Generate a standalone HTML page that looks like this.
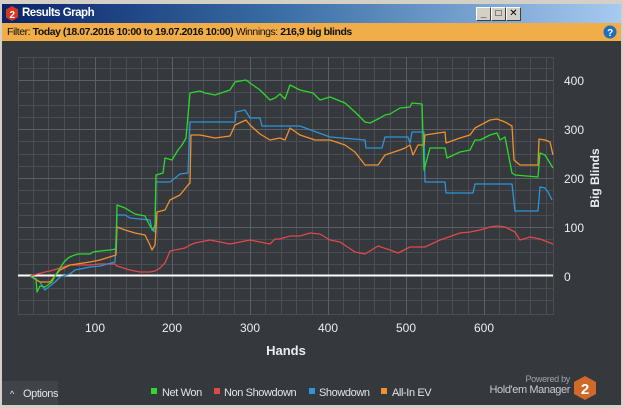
<!DOCTYPE html>
<html><head><meta charset="utf-8"><style>
body{margin:0;width:623px;height:408px;overflow:hidden;background:#d4d0c8;font-family:"Liberation Sans","DejaVu Sans",sans-serif;position:relative}
.title{position:absolute;left:2px;top:4px;width:619px;height:19px;background:linear-gradient(90deg,#0a246a 0%,#3a6ea5 45%,#a6caf0 100%);color:#fff;font-weight:bold;font-size:11.5px;letter-spacing:-0.5px;line-height:19px}
.filter{position:absolute;left:2px;top:23px;width:619px;height:18px;background:#f0ad48;font-size:10.5px;letter-spacing:-0.45px;line-height:18px;color:#111}
.body{position:absolute;left:2px;top:41px;width:619px;height:364px;background:#35383c}
.btn{position:absolute;top:3px;width:13px;height:12px;background:#d4d0c8;border:1px solid #fff;border-right-color:#404040;border-bottom-color:#404040;color:#000;font-size:10px;line-height:12px;text-align:center;letter-spacing:0}
</style></head><body>
<div class="title">
<svg style="position:absolute;left:3px;top:2px" width="14" height="15"><polygon points="7,0 13,3.5 13,11.5 7,15 1,11.5 1,3.5" fill="#d9381e"/><text x="7" y="12" fill="#fff" font-size="10" font-weight="bold" text-anchor="middle" font-family="Liberation Sans">2</text></svg>
<span style="position:absolute;left:20px">Results Graph</span>
<div class="btn" style="left:474px">_</div><div class="btn" style="left:489px">□</div><div class="btn" style="left:504px">✕</div>
</div>
<div class="filter"><span style="margin-left:5px">Filter: <b>Today (18.07.2016 10:00 to 19.07.2016 10:00)</b> Winnings: <b>216,9 big blinds</b></span>
<svg style="position:absolute;left:601px;top:2px" width="14" height="14"><circle cx="7" cy="7" r="6.5" fill="#1f6fc0"/><text x="7" y="11" fill="#fff" font-size="10" font-weight="bold" text-anchor="middle" font-family="Liberation Sans">?</text></svg></div>
<div class="body"></div>
<svg style="position:absolute;left:0;top:0" width="623" height="408">
<g stroke="#4a4d51" stroke-width="1">
<path d="M18.5 57V315 M33.5 57V315 M48.5 57V315 M64.5 57V315 M79.5 57V315 M110.5 57V315 M126.5 57V315 M141.5 57V315 M157.5 57V315 M188.5 57V315 M203.5 57V315 M219.5 57V315 M234.5 57V315 M265.5 57V315 M281.5 57V315 M296.5 57V315 M312.5 57V315 M343.5 57V315 M359.5 57V315 M374.5 57V315 M390.5 57V315 M421.5 57V315 M437.5 57V315 M452.5 57V315 M468.5 57V315 M499.5 57V315 M515.5 57V315 M530.5 57V315 M546.5 57V315"/>
<path d="M18 57.5H553 M18 68.5H553 M18 92.5H553 M18 105.5H553 M18 117.5H553 M18 141.5H553 M18 154.5H553 M18 166.5H553 M18 190.5H553 M18 203.5H553 M18 215.5H553 M18 239.5H553 M18 252.5H553 M18 264.5H553 M18 288.5H553 M18 300.5H553 M18 314.5H553 M553.5 57V315"/>
</g>
<g stroke="#5c5f63" stroke-width="1"><path d="M95.5 57V315 M172.5 57V315 M250.5 57V315 M328.5 57V315 M406.5 57V315 M484.5 57V315 M18 80.5H553 M18 129.5H553 M18 178.5H553 M18 227.5H553"/></g>
<line x1="18" y1="275.5" x2="553" y2="275.5" stroke="#fff" stroke-width="2"/>
<g fill="none" stroke-width="1.3" stroke-linejoin="round">
<polyline stroke="#e0484a" points="30,276 45,272 50,271 60,268 70,265 90,265 100,264 115,264 117,266 130,270 140,272 150,272 155,271 160,268 165,263 170,251 185,248 190,245 195,243 210,240 230,244 250,240 260,242 270,244 275,239 280,239 290,236 300,236 310,233 320,234 330,240 340,242 355,252 365,254 378,246 390,250 398,253 410,247 425,247 440,240 460,233 470,232 480,230 490,227 497,226 505,227 515,232 520,240 530,237 540,239 553,244"/>
<polyline stroke="#2e95d8" points="30,276 40,282 45,290 50,286 55,282 60,277 70,274 75,270 90,267 100,266 115,262 117,215 125,215 130,218 150,220 152,230 155,232 156,182 170,182 180,174 188,173 190,122 235,122 236,112 245,110 250,118 260,118 262,126 300,126 330,137 365,140 366,148 382,148 385,137 408,137 410,143 412,132 424,132 425,182 445,182 446,193 473,193 475,184 512,184 515,211 538,211 540,187 545,188 548,192 552,200"/>
<polyline stroke="#f0902e" points="30,276 40,282 50,282 60,270 70,265 90,262 100,260 116,255 117,227 125,230 135,233 145,235 150,245 152,250 155,245 157,212 165,210 170,200 180,195 188,185 190,183 191,135 200,135 205,136 215,138 230,136 235,125 246,120 250,125 260,134 270,140 280,138 285,140 290,128 300,135 315,140 330,140 345,145 355,152 365,165 378,165 385,155 400,150 405,148 410,145 413,155 418,145 424,145 425,135 445,132 446,143 460,138 470,135 475,128 490,120 497,119 505,122 512,126 514,160 520,165 538,165 539,139 545,140 550,142 553,155"/>
<polyline stroke="#2ed82e" points="30,276 36,279 37,292 40,286 45,287 52,282 55,276 60,268 64,262 68,258 72,256 78,254 90,254 93,252 100,251 110,250 116,249 117,205 125,208 135,214 145,216 150,226 153,230 155,225 156,175 163,173 165,158 172,160 178,150 182,145 186,138 190,93 200,91 205,93 215,95 230,90 235,82 246,80 250,83 260,90 270,100 275,98 280,94 285,99 290,85 300,90 313,93 320,100 330,97 345,103 355,112 365,122 370,123 380,118 385,115 390,114 400,108 410,107 412,103 422,104 424,170 430,148 445,148 447,158 460,152 470,150 475,140 480,140 490,135 497,133 500,140 505,137 512,173 515,175 538,177 540,153 545,155 553,168"/>
</g>
<g fill="#e8eef5" font-size="12" font-family="Liberation Sans">
<text x="95" y="332" text-anchor="middle">100</text><text x="172" y="332" text-anchor="middle">200</text><text x="250" y="332" text-anchor="middle">300</text><text x="328" y="332" text-anchor="middle">400</text><text x="406" y="332" text-anchor="middle">500</text><text x="484" y="332" text-anchor="middle">600</text>
<text x="564" y="85">400</text><text x="564" y="134">300</text><text x="564" y="183">200</text><text x="564" y="232">100</text><text x="564" y="281">0</text>
<text x="286" y="355" text-anchor="middle" font-weight="bold" font-size="13">Hands</text>
<text transform="translate(599,178) rotate(-90)" text-anchor="middle" font-weight="bold" font-size="12">Big Blinds</text>
</g>
<rect x="2" y="381" width="56" height="24" fill="#404347"/>
<g font-size="11" fill="#dfe6ee" font-family="Liberation Sans" letter-spacing="-0.4">
<text x="10" y="397" font-size="9">^</text><text x="23" y="397">Options</text>
<rect x="151" y="388" width="6" height="6" fill="#2ed82e"/><text x="162" y="396">Net Won</text>
<rect x="214" y="388" width="6" height="6" fill="#e0484a"/><text x="224" y="396">Non Showdown</text>
<rect x="309" y="388" width="6" height="6" fill="#2e95d8"/><text x="319" y="396">Showdown</text>
<rect x="381" y="388" width="6" height="6" fill="#f0902e"/><text x="392" y="396">All-In EV</text>
<text x="570" y="382" font-size="9" fill="#a0a4a8" text-anchor="end" letter-spacing="-0.3">Powered by</text>
<text x="570" y="393" font-size="11" fill="#c8ccd0" text-anchor="end">Hold'em Manager</text>
</g>
<polygon points="585,376 596,382 596,394 585,400 574,394 574,382" fill="#d06a28"/>
<text x="585" y="394" fill="#fff" font-size="15" font-weight="bold" text-anchor="middle" font-family="Liberation Sans">2</text>
</svg>
</body></html>
